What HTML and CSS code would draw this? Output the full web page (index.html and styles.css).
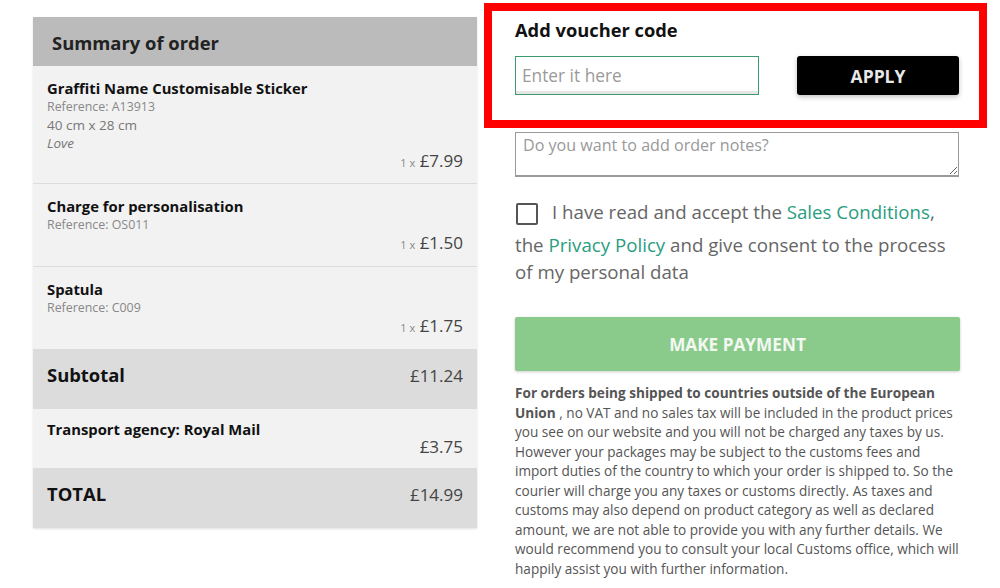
FILE: index.html
```html
<!DOCTYPE html>
<html lang="en">
<head>
<meta charset="utf-8">
<title>Checkout</title>
<link rel="stylesheet" href="styles.css">
</head>
<body>
<div class="page">
  <section class="summary">
    <h2 class="summary-head">Summary of order</h2>
    <div class="item item-a">
      <div class="item-title">Graffiti Name Customisable Sticker</div>
      <div class="item-ref">Reference: A13913</div>
      <div class="item-opt">40 cm x 28 cm</div>
      <div class="item-opt italic">Love</div>
      <div class="item-price"><span class="qty">1 x</span> £7.99</div>
    </div>
    <div class="item item-b">
      <div class="item-title">Charge for personalisation</div>
      <div class="item-ref">Reference: OS011</div>
      <div class="item-price"><span class="qty">1 x</span> £1.50</div>
    </div>
    <div class="item item-c">
      <div class="item-title">Spatula</div>
      <div class="item-ref">Reference: C009</div>
      <div class="item-price"><span class="qty">1 x</span> £1.75</div>
    </div>
    <div class="total-row">
      <span class="total-label">Subtotal</span>
      <span class="total-value">£11.24</span>
    </div>
    <div class="transport">
      <div class="item-title">Transport agency: Royal Mail</div>
      <div class="transport-price">£3.75</div>
    </div>
    <div class="total-row">
      <span class="total-label">TOTAL</span>
      <span class="total-value">£14.99</span>
    </div>
  </section>

  <section class="checkout">
    <div class="voucher">
      <h3 class="voucher-title">Add voucher code</h3>
      <div class="voucher-row">
        <input class="voucher-input" type="text" placeholder="Enter it here">
        <button class="btn-apply" type="button">APPLY</button>
      </div>
    </div>
    <div class="checkout-body">
      <textarea class="notes" placeholder="Do you want to add order notes?"></textarea>
      <p class="consent"><span class="checkbox"></span>I have read and accept the <a href="#">Sales Conditions</a>, the <a href="#">Privacy Policy</a> and give consent to the process of my personal data</p>
      <button class="btn-pay" type="button">MAKE PAYMENT</button>
      <p class="disclaimer"><strong>For orders being shipped to countries outside of the European Union</strong> , no VAT and no sales tax will be included in the product prices you see on our website and you will not be charged any taxes by us. However your packages may be subject to the customs fees and import duties of the country to which your order is shipped to. So the courier will charge you any taxes or customs directly. As taxes and customs may also depend on product category as well as declared amount, we are not able to provide you with any further details. We would recommend you to consult your local Customs office, which will happily assist you with further information.</p>
    </div>
  </section>
</div>
</body>
</html>
```

FILE: styles.css
```css
* { box-sizing: border-box; }
html, body { margin: 0; padding: 0; background: #fff; }
body {
  font-family: "Open Sans", "Noto Sans", "Liberation Sans", sans-serif;
  color: #444;
  width: 1000px;
  height: 588px;
  overflow: hidden;
}
.page {
  display: flex;
  align-items: flex-start;
}

/* Summary */
.summary {
  width: 444px;
  margin: 17px 0 0 33px;
  background: #f2f2f2;
  box-shadow: 0 1px 2px rgba(0,0,0,0.12);
}
.summary-head {
  margin: 0;
  height: 49px;
  background: #bbbbbb;
  padding: 0 0 0 19px;
  font-size: 18.4px;
  font-weight: 700;
  line-height: 52px;
  color: #222;
}
.item {
  padding: 12px 14px 0 14px;
  border-bottom: 1px solid #dcdcdc;
}
.item-a { height: 118px; }
.item-b { height: 83px; }
.item-c { height: 82px; border-bottom: 0; }
.item-title {
  font-size: 14.8px;
  line-height: 20px;
  font-weight: 700;
  color: #111;
}
.item-ref {
  font-size: 12.4px;
  line-height: 18px;
  color: #888;
}
.item-opt {
  font-size: 13.5px;
  line-height: 18px;
  color: #777;
}
.italic { font-style: italic; }
.item-price {
  text-align: right;
  font-size: 17px;
  line-height: 18px;
  color: #444;
}
.qty {
  font-size: 11px;
  color: #888;
}
.total-row {
  display: flex;
  justify-content: space-between;
  align-items: baseline;
  height: 60px;
  padding: 14px 14px 0 14px;
  background: #dcdcdc;
}
.total-label {
  font-size: 18.4px;
  line-height: 24px;
  font-weight: 700;
  color: #111;
}
.total-value {
  font-size: 17px;
  line-height: 24px;
  color: #444;
}
.transport {
  height: 59px;
  padding: 10px 14px 0 14px;
  background: #f2f2f2;
}
.transport-price {
  text-align: right;
  font-size: 17px;
  line-height: 16px;
  color: #444;
}

/* Checkout */
.checkout {
  width: 503px;
  margin: 3px 0 0 7px;
}
.voucher {
  height: 125px;
  border: 8px solid #ff0000;
  padding: 7px 20px 0 23px;
}
.voucher-title {
  margin: 0;
  font-size: 18.3px;
  line-height: 24px;
  font-weight: 700;
  color: #111;
}
.voucher-row {
  display: flex;
  justify-content: space-between;
  margin-top: 14px;
}
.voucher-input {
  width: 244px;
  height: 39px;
  border: 1px solid #3c9a6e;
  box-shadow: inset 0 -3px 0 #e6e6e6;
  padding: 0 6px;
  font-family: inherit;
  font-size: 17.3px;
  color: #444;
  outline: none;
  background: #fff;
}
.voucher-input::placeholder { color: #9a9a9a; }
.btn-apply {
  width: 162px;
  height: 39px;
  border: 0;
  border-radius: 3px;
  background: #000;
  color: #e8e8e8;
  font-family: inherit;
  font-size: 17.5px;
  font-weight: 700;
  box-shadow: 0 2px 5px rgba(0,0,0,0.25);
}
.checkout-body {
  padding: 4px 28px 0 31px;
}
.notes {
  display: block;
  width: 444px;
  height: 45px;
  border: 1px solid #9a9a9a;
  border-bottom-width: 2px;
  padding: 1px 7px;
  font-family: inherit;
  font-size: 16.1px;
  color: #444;
  resize: vertical;
}
.notes::placeholder { color: #999; }
.consent {
  margin: 22px 0 0 0;
  font-size: 18.7px;
  line-height: 26.5px;
  color: #666;
}
.consent a {
  color: #2a9d7f;
  text-decoration: none;
}
.checkbox {
  display: inline-block;
  width: 22px;
  height: 22px;
  border: 2px solid #555;
  border-radius: 2px;
  vertical-align: -13px;
  margin: 0 14px 7px 1px;
}
.btn-pay {
  display: block;
  width: 445px;
  height: 54px;
  margin-top: 32px;
  border: 0;
  border-radius: 2px;
  background: #8acb8c;
  color: #f3f8f3;
  font-family: inherit;
  font-size: 17.2px;
  font-weight: 700;
  box-shadow: 0 1px 3px rgba(0,0,0,0.2);
}
.disclaimer {
  margin: 12px 0 0 0;
  font-size: 13.6px;
  line-height: 19.5px;
  color: #555;
}
.disclaimer strong { color: #555; }
```
